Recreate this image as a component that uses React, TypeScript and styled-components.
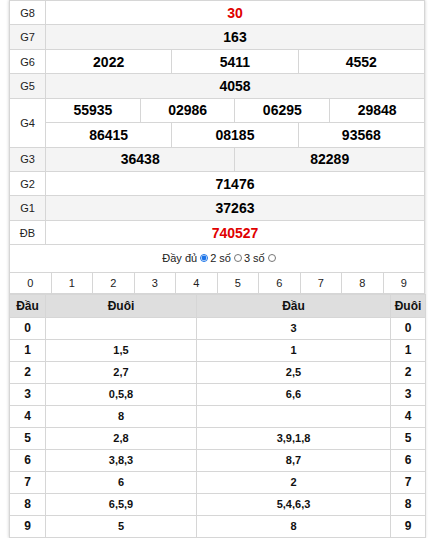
import React from 'react';
import styled, { createGlobalStyle } from 'styled-components';

const Global = createGlobalStyle`
  html, body { margin: 0; padding: 0; background: #fff; }
  body { font-family: "Liberation Sans", Arial, sans-serif; color: #000; }
`;

const Wrap = styled.div`
  margin-left: 9px;
  width: 416px;
  box-shadow: 0 0 3px rgba(0, 0, 0, 0.22);
`;

const Table = styled.table`
  width: 416px;
  border-collapse: collapse;
  table-layout: fixed;
`;

const Row = styled.tr<{ $alt?: boolean; $h: number }>`
  height: ${(p) => p.$h}px;
  background: ${(p) => (p.$alt ? '#f4f4f4' : '#fff')};
`;

const Label = styled.td`
  border: 1px solid #d6d6d6;
  padding: 0;
  text-align: center;
  font-size: 11px;
  color: #222;
`;

const Num = styled.td<{ $red?: boolean }>`
  border: 1px solid #d6d6d6;
  padding: 0;
  text-align: center;
  font-size: 14px;
  font-weight: bold;
  color: ${(p) => (p.$red ? '#e00000' : '#000')};
`;

const RadioBar = styled.div`
  height: 27px;
  border-left: 1px solid #d6d6d6;
  border-right: 1px solid #d6d6d6;
  display: flex;
  align-items: center;
  justify-content: center;
  font-size: 11px;
  color: #222;
  padding: 0 0 2px 6px;
  box-sizing: border-box;
`;

const Radio = styled.input.attrs({ type: 'radio' })`
  width: 8px;
  height: 8px;
  margin: 1px 2px 0 3px;
  accent-color: #1a73e8;
`;

const TabCell = styled.td`
  border: 1px solid #d6d6d6;
  padding: 0;
  text-align: center;
  font-size: 11px;
  color: #222;
`;

const Head = styled.th`
  border: 1px solid #d6d6d6;
  padding: 0;
  background: #dedede;
  text-align: center;
  font-size: 12px;
  font-weight: bold;
  color: #111;
`;

const Cell = styled.td<{ $small?: boolean }>`
  border: 1px solid #d6d6d6;
  padding: 0;
  text-align: center;
  font-size: ${(p) => (p.$small ? '11px' : '12px')};
  font-weight: bold;
  color: #111;
`;

type Prize = { label: string; rows: { values: string[]; span: number }[]; alt?: boolean; red?: boolean };

const prizes: Prize[] = [
  { label: 'G8', rows: [{ values: ['30'], span: 12 }], red: true },
  { label: 'G7', rows: [{ values: ['163'], span: 12 }], alt: true },
  { label: 'G6', rows: [{ values: ['2022', '5411', '4552'], span: 4 }] },
  { label: 'G5', rows: [{ values: ['4058'], span: 12 }], alt: true },
  {
    label: 'G4',
    rows: [
      { values: ['55935', '02986', '06295', '29848'], span: 3 },
      { values: ['86415', '08185', '93568'], span: 4 },
    ],
  },
  { label: 'G3', rows: [{ values: ['36438', '82289'], span: 6 }], alt: true },
  { label: 'G2', rows: [{ values: ['71476'], span: 12 }] },
  { label: 'G1', rows: [{ values: ['37263'], span: 12 }], alt: true },
  { label: 'ĐB', rows: [{ values: ['740527'], span: 12 }], red: true },
];

const loto: [string, string, string, string][] = [
  ['0', '', '3', '0'],
  ['1', '1,5', '1', '1'],
  ['2', '2,7', '2,5', '2'],
  ['3', '0,5,8', '6,6', '3'],
  ['4', '8', '', '4'],
  ['5', '2,8', '3,9,1,8', '5'],
  ['6', '3,8,3', '8,7', '6'],
  ['7', '6', '2', '7'],
  ['8', '6,5,9', '5,4,6,3', '8'],
  ['9', '5', '8', '9'],
];

const RH = 24.43;

export default function App() {
  return (
    <>
      <Global />
      <Wrap>
        <Table>
          <colgroup>
            <col style={{ width: 36 }} />
            {Array.from({ length: 12 }).map((_, i) => (
              <col key={i} />
            ))}
          </colgroup>
          <tbody>
            {prizes.map((p) =>
              p.rows.map((r, ri) => (
                <Row key={p.label + ri} $alt={p.alt} $h={RH}>
                  {ri === 0 && <Label rowSpan={p.rows.length}>{p.label}</Label>}
                  {r.values.map((v, vi) => (
                    <Num key={vi} colSpan={r.span} $red={p.red}>
                      {v}
                    </Num>
                  ))}
                </Row>
              )),
            )}
          </tbody>
        </Table>
        <RadioBar>
          Đầy đủ
          <Radio name="mode" defaultChecked />
          2 số
          <Radio name="mode" />
          3 số
          <Radio name="mode" />
        </RadioBar>
        <Table>
          <tbody>
            <Row $h={20.6}>
              {Array.from({ length: 10 }).map((_, i) => (
                <TabCell key={i}>{i}</TabCell>
              ))}
            </Row>
          </tbody>
        </Table>
        <Table>
          <colgroup>
            <col style={{ width: 36 }} />
            <col style={{ width: 151 }} />
            <col style={{ width: 194 }} />
            <col style={{ width: 35 }} />
          </colgroup>
          <thead>
            <Row $h={23}>
              <Head>Đầu</Head>
              <Head>Đuôi</Head>
              <Head>Đầu</Head>
              <Head>Đuôi</Head>
            </Row>
          </thead>
          <tbody>
            {loto.map((r) => (
              <Row key={r[0]} $h={22}>
                <Cell>{r[0]}</Cell>
                <Cell $small>{r[1]}</Cell>
                <Cell $small>{r[2]}</Cell>
                <Cell>{r[3]}</Cell>
              </Row>
            ))}
          </tbody>
        </Table>
      </Wrap>
    </>
  );
}
